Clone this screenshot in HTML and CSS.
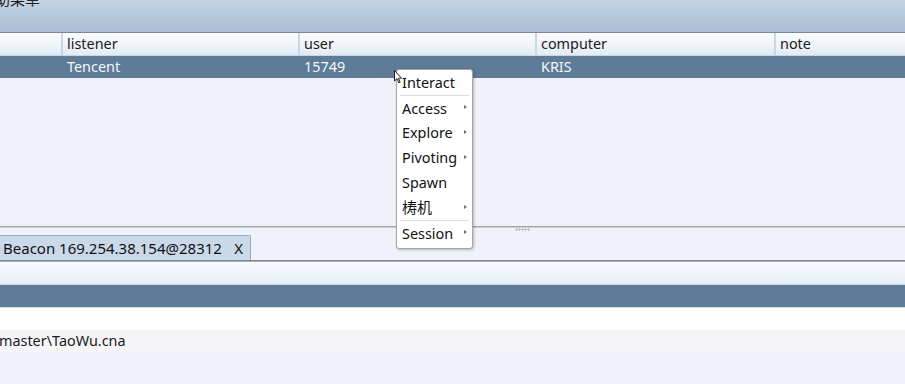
FILE: index.html
```html
<!DOCTYPE html>
<html>

<head>
    <meta name="viewport" content="width=device-width, initial-scale=1">
    <title>Beacon</title>
    <link rel="stylesheet" href="styles.css">
</head>

<body>
    <div class="menubar">
        <span class="menubar-title">辅助菜单</span>
    </div>

    <div class="table">
        <div class="table-head">
            <div class="cell"></div>
            <div class="cell">listener</div>
            <div class="cell">user</div>
            <div class="cell">computer</div>
            <div class="cell">note</div>
        </div>
        <div class="table-row selected">
            <div class="cell"></div>
            <div class="cell">Tencent</div>
            <div class="cell">15749</div>
            <div class="cell">KRIS</div>
            <div class="cell"></div>
        </div>
    </div>

    <div class="splitter">
        <span class="grip"></span>
    </div>

    <div class="tabs">
        <div class="tab">
            <span>Beacon 169.254.38.154@28312</span>
            <span class="tab-close">X</span>
        </div>
    </div>

    <div class="console">
        <div class="console-head"></div>
        <div class="console-bar"></div>
        <div class="console-line"></div>
        <div class="console-line alt">master\TaoWu.cna</div>
    </div>

    <ul class="context-menu">
        <li>Interact</li>
        <li class="sep sub">Access</li>
        <li class="sub">Explore</li>
        <li class="sub">Pivoting</li>
        <li>Spawn</li>
        <li class="sub cjk">梼机</li>
        <li class="sep sub">Session</li>
    </ul>

    <svg class="cursor" width="8" height="14" viewBox="0 0 8 14">
        <path d="M0.5 0.5 L0.5 11 L3 8.6 L4.8 12.8 L6.2 12.2 L4.5 8.2 L7.5 8.2 Z" fill="#fff" stroke="#222" stroke-width="1"/>
    </svg>
</body>

</html>
```

FILE: styles.css
```css
body {
    font-family: "Noto Sans", "Noto Sans CJK SC", sans-serif;
    font-size: 14.4px;
    margin: 0;
    padding: 0;
    width: 905px;
    height: 384px;
    overflow: hidden;
    position: relative;
    background-color: #eff2fa;
    color: #1a1a1a;
}

.menubar {
    height: 32px;
    overflow: hidden;
    background: linear-gradient(#c4d4e5, #a9bdd4);
}

.menubar-title {
    display: block;
    margin-top: -11px;
    margin-left: -20px;
    font-size: 15px;
    line-height: 20px;
    color: #222;
    white-space: nowrap;
}

.table {
    border-top: 1px solid #7d8896;
}

.table-head,
.table-row {
    display: grid;
    grid-template-columns: 63px 237px 237px 239px 1fr;
}

.table-head {
    height: 22px;
    background: linear-gradient(#fcfdff, #e3ebf5);
    border-bottom: 1px solid #c7d5e4;
}

.table-head .cell {
    border-right: 2px solid #c9d7e6;
    line-height: 21px;
}

.table-head .cell:last-child {
    border-right: none;
}

.cell {
    padding-left: 4px;
    line-height: 22px;
    white-space: nowrap;
    overflow: hidden;
}

.table-row {
    height: 22px;
}

.selected {
    background-color: #5e7b98;
    color: #f4f7fb;
}

.splitter {
    height: 148px;
    position: relative;
    border-bottom: 1px solid #a3a3a3;
    box-shadow: 0 1px 0 #cfcfcf;
}

.grip {
    position: absolute;
    left: 515px;
    bottom: -5px;
    width: 15px;
    height: 3px;
    background: radial-gradient(circle, #b8c2cf 1px, transparent 1.2px) 0 0 / 3px 3px;
}

.tabs {
    padding-top: 8px;
    height: 25px;
    border-bottom: 1px solid #7a8899;
    box-shadow: 0 1px 0 #ababab;
}

.tab {
    width: 247px;
    height: 24px;
    padding-left: 3px;
    display: flex;
    justify-content: space-between;
    background-color: #c9d9ea;
    border: 1px solid #9daabb;
    border-left: none;
    border-bottom: none;
    border-radius: 0 2px 0 0;
    line-height: 24px;
    font-size: 15px;
    color: #111;
}

.tab-close {
    padding-right: 7px;
}

.console {
    margin-top: 1px;
}

.console-head {
    height: 22px;
    background: linear-gradient(#f9fbff, #e7edf6);
    border-bottom: 1px solid #c9d8e8;
}

.console-bar {
    height: 22px;
    background-color: #5e7b98;
    border-bottom: 1px solid #d6dee8;
}

.console-line {
    height: 22px;
    line-height: 22px;
    background-color: #ffffff;
    white-space: nowrap;
}

.console-line.alt {
    background-color: #f5f5f8;
    margin-left: -1px;
}

.context-menu {
    position: absolute;
    left: 396px;
    top: 69px;
    width: 75px;
    margin: 0;
    padding: 0 0 3px;
    list-style: none;
    background-color: #ffffff;
    border: 1px solid #a6a6a6;
    border-radius: 3px;
    box-shadow: 1px 1px 3px rgba(0, 0, 0, 0.25);
    color: #111;
}

.context-menu li {
    position: relative;
    height: 25px;
    line-height: 25px;
    padding-left: 5px;
    box-sizing: border-box;
}

.context-menu li.cjk {
    font-size: 15px;
}

.context-menu li.sep {
    border-top: 1px solid #dcdcdc;
    margin: 0 3px;
    padding-left: 2px;
}

.context-menu li.sub::after {
    content: "";
    position: absolute;
    right: 5px;
    top: 10px;
    border-left: 3px solid #707070;
    border-top: 2.5px solid transparent;
    border-bottom: 2.5px solid transparent;
}

.context-menu li.sep.sub::after {
    right: 2px;
    top: 9px;
}

.cursor {
    position: absolute;
    left: 394px;
    top: 70px;
}
```
